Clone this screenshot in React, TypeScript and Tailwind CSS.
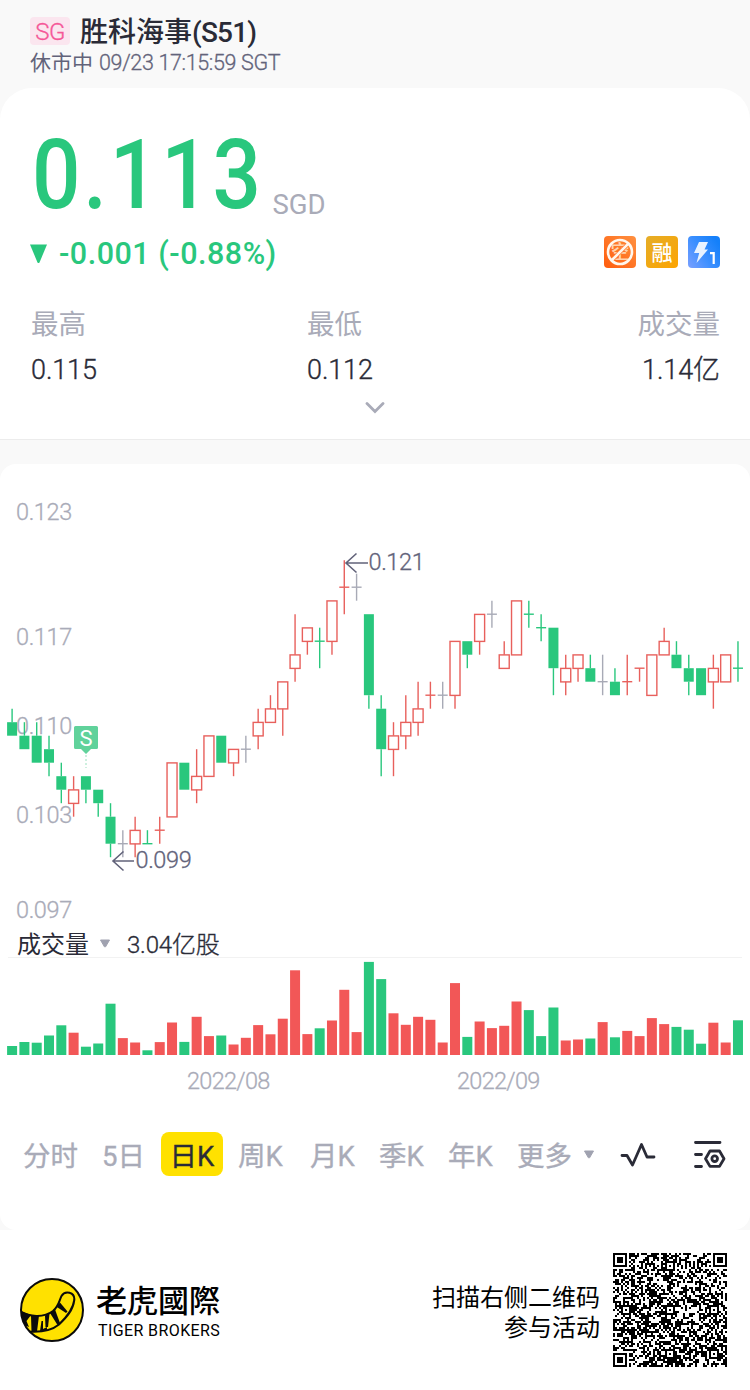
import { ReactNode } from "react";

type Tone = "up" | "down" | "flat";

// [tone, high, body top, body bottom, low, volume height]
// prices are in thousandths of a dollar
type Candle = [Tone, number, number, number, number, number];

const CANDLES: Candle[] = [
  ["down", 110, 109, 108, 108, 9.3],
  ["down", 109, 108, 107, 107, 13.3],
  ["down", 109, 108, 106, 106, 12.6],
  ["down", 108, 107, 106, 105, 19.8],
  ["down", 106, 105, 104, 103, 30],
  ["up", 105, 104, 103, 102, 22.6],
  ["down", 105, 105, 104, 103, 8.6],
  ["down", 104, 104, 103, 102, 11.8],
  ["down", 103, 102, 100, 99, 51.6],
  ["flat", 101, 100, 100, 99, 17.2],
  ["up", 102, 101, 100, 99, 12.8],
  ["down", 101, 100, 100, 100, 5],
  ["up", 102, 101, 101, 100, 13.2],
  ["up", 106, 106, 102, 102, 32.8],
  ["down", 106, 106, 104, 104, 13.4],
  ["up", 107, 105, 104, 103, 38.5],
  ["up", 108, 108, 105, 105, 19.2],
  ["down", 108, 108, 106, 106, 19.8],
  ["up", 107, 107, 106, 105, 10.8],
  ["flat", 108, 107, 107, 106, 17.5],
  ["up", 110, 109, 108, 107, 30.2],
  ["up", 111, 110, 109, 109, 21],
  ["up", 112, 112, 110, 108, 36.6],
  ["up", 117, 114, 113, 112, 85],
  ["up", 116, 116, 115, 114, 21.2],
  ["down", 116, 115, 115, 113, 27],
  ["up", 118, 118, 115, 114, 34.8],
  ["up", 121, 119, 119, 117, 65.5],
  ["flat", 120, 119, 119, 118, 23.2],
  ["down", 117, 117, 111, 110, 93.4],
  ["down", 111, 110, 107, 105, 76.2],
  ["up", 109, 108, 107, 105, 42],
  ["up", 111, 109, 108, 107, 30.5],
  ["up", 112, 110, 109, 108, 38.5],
  ["up", 112, 111, 111, 110, 35.5],
  ["flat", 112, 111, 111, 110, 12.8],
  ["up", 115, 115, 111, 110, 72.2],
  ["down", 115, 115, 114, 113, 18.4],
  ["up", 117, 117, 115, 114, 33.8],
  ["flat", 118, 117, 117, 116, 27.2],
  ["up", 115, 114, 113, 113, 29.5],
  ["up", 118, 118, 114, 114, 53.8],
  ["down", 118, 117, 117, 116, 45.2],
  ["down", 117, 116, 116, 115, 19.2],
  ["down", 116, 116, 113, 111, 47.8],
  ["up", 114, 113, 112, 111, 14.8],
  ["up", 114, 114, 113, 112, 15.8],
  ["down", 114, 113, 112, 112, 16.8],
  ["flat", 114, 112, 112, 111, 33.2],
  ["down", 113, 112, 111, 111, 18],
  ["up", 114, 112, 112, 111, 24.4],
  ["up", 113, 113, 113, 112, 19.2],
  ["up", 114, 114, 111, 111, 37.2],
  ["up", 116, 115, 114, 114, 31.2],
  ["down", 115, 114, 113, 113, 28.4],
  ["down", 114, 113, 112, 111, 25.6],
  ["down", 113, 113, 111, 111, 11.6],
  ["up", 114, 113, 112, 110, 32.6],
  ["up", 114, 114, 112, 112, 12.8],
  ["down", 115, 113, 113, 112, 35],
];

const GREEN = "#29c77d";
const RED = "#f25757";
const LINE_COLOR: Record<Tone, string> = { up: "#e8605c", down: GREEN, flat: "#a8aab6" };

const AXIS = [
  { label: "0.123", y: 56 },
  { label: "0.117", y: 181 },
  { label: "0.110", y: 270 },
  { label: "0.103", y: 359 },
  { label: "0.097", y: 454 },
];

const centerX = (i: number) => 12.1 + i * 12.303;
const priceY = (p: number) => 96.2 + (121 - p) * 13.5;

const CandleMark = ({ candle, x }: { candle: Candle; x: number }) => {
  const [tone, high, top, bottom, low] = candle;
  const color = LINE_COLOR[tone];
  const yTop = priceY(top);
  const yBottom = priceY(bottom);
  return (
    <g stroke={color} strokeWidth={1.4} fill="none">
      {high > top && <path d={`M${x} ${priceY(high)}V${yTop}`} />}
      {low < bottom && <path d={`M${x} ${yBottom}V${priceY(low)}`} />}
      {top === bottom ? (
        <path d={`M${x - 5} ${yTop}h10`} />
      ) : tone === "up" ? (
        <rect x={x - 5} y={yTop + 0.2} width={10} height={yBottom - yTop} />
      ) : (
        <rect x={x - 5} y={yTop} width={10} height={yBottom - yTop} fill={color} stroke="none" />
      )}
    </g>
  );
};

const PriceChart = () => (
  <svg width="750" height="465" className="block">
    <g fill="#a9abb8" stroke="#a9abb8" strokeWidth="0.3" fontSize="23.5" fontWeight="300" letterSpacing="-0.4">
      {AXIS.map((a) => (
        <text key={a.label} x="16" y={a.y}>
          {a.label}
        </text>
      ))}
    </g>
    {CANDLES.map((c, i) => (
      <CandleMark key={i} candle={c} x={centerX(i)} />
    ))}
    <g fill="none" stroke="#62637a" strokeWidth="1.6">
      <path d="M368 99H346M356.500 89.500L346 99L356.500 108.500" />
      <path d="M134 397H113M123.500 387.500L113 397L123.500 406.500" />
    </g>
    <g fill="#62637a" stroke="#62637a" strokeWidth="0.3" fontSize="23.500" fontWeight="300" letterSpacing="-0.4">
      <text x="368.500" y="106">0.121</text>
      <text x="135.500" y="404">0.099</text>
    </g>
    <path d="M75.500 262h21a1.500 1.500 0 0 1 1.500 1.500v20a1.500 1.500 0 0 1-1.500 1.500h-5.500l-5 5-5-5h-5.500a1.500 1.500 0 0 1-1.500-1.500v-20a1.500 1.500 0 0 1 1.500-1.500z" fill="#60d29b" />
    <path d="M86 291v13" stroke="#9be0bf" strokeWidth="1" strokeDasharray="2 2" />
    <text x="86" y="281.500" textAnchor="middle" fill="#fff" fontSize="22">
      S
    </text>
  </svg>
);

const VolumeChart = () => (
  <svg width="750" height="97" className="block">
    {CANDLES.map((c, i) => (
      <rect
        key={i}
        x={centerX(i) - 5}
        y={97.3 - c[5]}
        width={10}
        height={c[5]}
        fill={c[0] === "down" ? GREEN : RED}
      />
    ))}
  </svg>
);

const Badge = ({ children }: { children: ReactNode }) => (
  <svg width="32" height="32" viewBox="0 0 32 32">
    {children}
  </svg>
);

const Badges = () => (
  <div className="flex gap-2.5">
    <Badge>
      <defs>
        <linearGradient id="short" x1="1" y1="0" x2="0" y2="1">
          <stop offset="0" stopColor="#ff9040" />
          <stop offset="1" stopColor="#ff5c0d" />
        </linearGradient>
      </defs>
      <rect width="32" height="32" rx="4" fill="url(#short)" />
      <text x="16" y="23" textAnchor="middle" fontSize="19" fontWeight="500" fill="#ffd2ae">
        空
      </text>
      <path d="M8.500 23.500L23.500 8.500" stroke="#ff7629" strokeWidth="4" />
      <circle cx="16" cy="16" r="12" fill="none" stroke="#fff7ee" strokeWidth="2.600" />
      <path d="M7.500 24.500L24.500 7.500" stroke="#fff7ee" strokeWidth="2.600" />
    </Badge>
    <Badge>
      <defs>
        <linearGradient id="margin" x1="0" y1="0" x2="1" y2="1">
          <stop offset="0" stopColor="#e5ad28" />
          <stop offset="1" stopColor="#fda400" />
        </linearGradient>
      </defs>
      <rect width="32" height="32" rx="4" fill="url(#margin)" />
      <text x="16" y="24" textAnchor="middle" fontSize="21" fontWeight="500" fill="#fff">
        融
      </text>
    </Badge>
    <Badge>
      <defs>
        <linearGradient id="level" x1="0" y1="1" x2="1" y2="0.300">
          <stop offset="0" stopColor="#7aa0ff" />
          <stop offset="0.500" stopColor="#3e90ff" />
          <stop offset="1" stopColor="#1480fa" />
        </linearGradient>
      </defs>
      <rect width="32" height="32" rx="4" fill="url(#level)" />
      <path d="M11 6h9l-3.500 7.500H20L8.500 27l2.700-10H6z" fill="#e9f3ff" />
      <path d="M22 17.200h3.700V28" fill="none" stroke="#fff" strokeWidth="2.200" />
    </Badge>
  </div>
);

const Stat = ({ label, value, align }: { label: string; value: ReactNode; align: string }) => (
  <div className={`flex flex-col ${align}`}>
    <span className="pt-px text-[27.5px] leading-[46px] text-[#a9abb8]">{label}</span>
    <span className="text-[27px] leading-[45px] font-light tracking-[-0.1px] text-[#2a2b37] [-webkit-text-stroke:0.35px]">
      {value}
    </span>
  </div>
);

const TigerLogo = () => (
  <svg width="66" height="66" viewBox="0 0 66 66">
    <defs>
      <clipPath id="disc">
        <circle cx="33" cy="33" r="31" />
      </clipPath>
    </defs>
    <circle cx="33" cy="33" r="31" fill="#ffe100" />
    <g clipPath="url(#disc)">
      <path
        d="M0 34C10 40 25 41 34 34C40 29 40 24 42.500 19C46 13 56 15 55.300 23C54 33 48 40 40 47.500C32 54 22 55.500 9 54.500"
        fill="none"
        stroke="#0b0b0b"
        strokeWidth="2"
        strokeLinejoin="round"
      />
      <g fill="#0b0b0b">
        <path d="M0 33L12 38L7.500 44L10 50L0 46Z" />
        <path d="M12 38L20 38.500L18 54.500L12.500 54.500Z" />
        <path d="M22.500 44L24 44L24 52L28 50L28 53.500L21 54Z" />
        <path d="M26 38.500L30.500 36.500L29 50L26.500 50Z" />
        <path d="M31 36L35.800 32L41 46L38.500 48Z" />
        <path d="M37.500 29.800L41 25.500L48.500 34.500L47 36Z" />
      </g>
    </g>
    <circle cx="33" cy="33" r="31" fill="none" stroke="#0b0b0b" strokeWidth="2" />
  </svg>
);

const QR_SIZE = 57;
const FINDERS = [[0, 0], [QR_SIZE - 7, 0], [0, QR_SIZE - 7]];
const ALIGNMENTS = [[28, 6], [50, 28], [6, 28], [28, 28], [28, 50], [50, 50]];

const buildQrPath = () => {
  let seed = 20220923;
  let d = "";
  for (let y = 0; y < QR_SIZE; y++) {
    for (let x = 0; x < QR_SIZE; x++) {
      seed = (Math.imul(seed, 1664525) + 1013904223) >>> 0;
      let dark = seed / 4294967296 < 0.52;
      if (x === 6) dark = y % 2 === 0;
      if (y === 6) dark = x % 2 === 0;
      for (const [ax, ay] of ALIGNMENTS) {
        const r = Math.max(Math.abs(x - ax), Math.abs(y - ay));
        if (r <= 2) dark = r !== 1;
      }
      for (const [fx, fy] of FINDERS) {
        const r = Math.max(Math.abs(x - fx - 3), Math.abs(y - fy - 3));
        if (r <= 4) dark = r !== 2 && r !== 4;
      }
      if (dark) d += `M${x} ${y}h1v1h-1z`;
    }
  }
  return d;
};

const QrCode = () => (
  <svg width="114" height="114" viewBox="0 0 57 57" shapeRendering="crispEdges">
    <path d={buildQrPath()} fill="#000" />
  </svg>
);

const Caret = () => (
  <svg width="12" height="9" viewBox="0 0 12 9">
    <path d="M1.500 1h9L6.700 7.600a.8.8 0 0 1-1.400 0z" fill="#a0a2b0" stroke="#a0a2b0" strokeLinejoin="round" />
  </svg>
);

const TABS = [
  { label: "分时", style: "ml-[23px] w-[79px]" },
  { label: "5日", style: "w-[59px]" },
  { label: "日K", style: "w-[62px] rounded-lg bg-[#ffe100] text-center text-[#2a2b37]" },
  { label: "周K", style: "ml-[15px] w-[72px]" },
  { label: "月K", style: "w-[69px]" },
  { label: "季K", style: "w-[69px]" },
  { label: "年K", style: "w-[69px]" },
  { label: "更多", style: "w-[66px]" },
];

const Tabs = () => (
  <div className="flex h-11 items-center text-[27.5px] leading-[49px] text-[#a9abb8] [-webkit-text-stroke:0.35px]">
    {TABS.map((t) => (
      <span key={t.label} className={`h-11 ${t.style}`}>
        {t.label}
      </span>
    ))}
    <Caret />
    <svg width="36" height="26" viewBox="0 0 36 26" className="mt-[2px] ml-[25px]">
      <path
        d="M2 13.500h5L12.500 23L21.500 2.500L27 15h7"
        fill="none"
        stroke="#2a2b37"
        strokeWidth="2.800"
        strokeLinecap="round"
        strokeLinejoin="round"
      />
    </svg>
    <svg width="34" height="30" viewBox="0 0 34 30" className="mt-[2px] ml-[37px]">
      <g fill="none" stroke="#2a2b37" strokeWidth="2.800" strokeLinecap="round" strokeLinejoin="round">
        <path d="M2.500 2.500H27M2.500 14.500H8.500M2.500 26.500H8.500" />
        <path d="M17 11h9.500l4.500 7.700-4.500 7.700H17l-4.500-7.700z" />
        <circle cx="21.700" cy="18.700" r="2.800" />
      </g>
    </svg>
  </div>
);

export default function App() {
  return (
    <div className="flex h-[1390px] w-[750px] flex-col overflow-hidden bg-[#f9f9f9] font-['Roboto','Noto_Sans_CJK_SC',sans-serif] whitespace-nowrap text-[#2a2b37]">
      <header className="h-[88px] pt-[12px] pl-[30px]">
        <div className="flex h-[37px] items-center">
          <span className="mr-[10px] h-7 w-10 rounded bg-[#fbe6ef] text-center text-[24px] leading-[30px] font-light tracking-[-0.5px] text-[#f55798] [-webkit-text-stroke:0.3px]">
            SG
          </span>
          <span className="pt-[4px] text-[28px] leading-[36px] font-medium">
            胜科海事<span className="tracking-[-0.8px]">(S51)</span>
          </span>
        </div>
        <div className="flex text-[21px] leading-[28px] text-[#62637a]">
          休市中
          <span className="ml-[6px] text-[21.5px] font-light tracking-[-0.35px] [-webkit-text-stroke:0.3px]">
            09/23 17:15:59 SGT
          </span>
        </div>
      </header>

      <section className="h-[352px] rounded-t-[32px] border-b border-[#ececec] bg-white px-[30px] pt-[37px]">
        <div className="flex h-[100px] items-start">
          <span className="ml-[2px] origin-left scale-x-[0.88] text-[97px] leading-[100px] font-medium tracking-[3.2px] text-[#29c77d]">
            0.113
          </span>
          <span className="mt-[62px] ml-[-23px] text-[27.5px] leading-[36px] text-[#a9abb8]">SGD</span>
        </div>
        <div className="mt-[11px] flex h-8 items-center justify-between">
          <div className="flex items-center pt-[3px] text-[30.5px] leading-8 font-medium tracking-[0.5px] text-[#29c77d]">
            <svg width="17" height="20" viewBox="0 0 17 20" className="mr-3">
              <path d="M0 .5h17L9.500 18.500q-1 1-2 0z" fill={GREEN} />
            </svg>
            -0.001 (-0.88%)
          </div>
          <Badges />
        </div>
        <div className="mt-[33px] flex">
          <Stat label="最高" value="0.115" align="w-[276px] items-start pl-px" />
          <Stat label="最低" value="0.112" align="items-start pl-px" />
          <Stat label="成交量" value="1.14亿" align="ml-auto items-end" />
        </div>
        <div className="mt-[9px] flex justify-center">
          <svg width="20" height="12" viewBox="0 0 20 12">
            <path d="M2 1.500l8 8 8-8" fill="none" stroke="#a9abb8" strokeWidth="2.800" strokeLinecap="round" />
          </svg>
        </div>
      </section>

      <section className="mt-6 h-[766px] rounded-2xl bg-white">
        <PriceChart />
        <div className="mx-2 flex h-[29px] items-center border-b border-[#f2f2f2] pl-[9px] text-[24px] leading-[29px]">
          <span className="w-[82px] pt-[4px]">成交量</span>
          <Caret />
          <span className="ml-4 pt-[4px] font-light tracking-[-0.2px] [-webkit-text-stroke:0.35px]">3.04亿股</span>
        </div>
        <VolumeChart />
        <div className="flex h-[77px] pt-[10px] text-[23.5px] leading-[32px] font-light tracking-[-0.7px] text-[#a9abb8] [-webkit-text-stroke:0.3px]">
          <span className="ml-[187px] w-[270px]">2022/08</span>
          <span>2022/09</span>
        </div>
        <Tabs />
      </section>

      <footer className="flex h-40 items-center bg-white pr-[23px] pl-[19px] text-black">
        <TigerLogo />
        <div className="ml-[11px] flex flex-col pt-[2px]">
          <span className="font-['Roboto','Noto_Sans_CJK_TC',sans-serif] text-[31px] leading-[38px] font-medium">老虎國際</span>
          <span className="ml-[2px] text-[16px] leading-[19px] tracking-[0.4px]">TIGER BROKERS</span>
        </div>
        <div className="mr-[13px] ml-auto pt-[6px] text-right text-[24px] leading-[30px]">
          扫描右侧二维码
          <br />
          参与活动
        </div>
        <QrCode />
      </footer>
    </div>
  );
}
